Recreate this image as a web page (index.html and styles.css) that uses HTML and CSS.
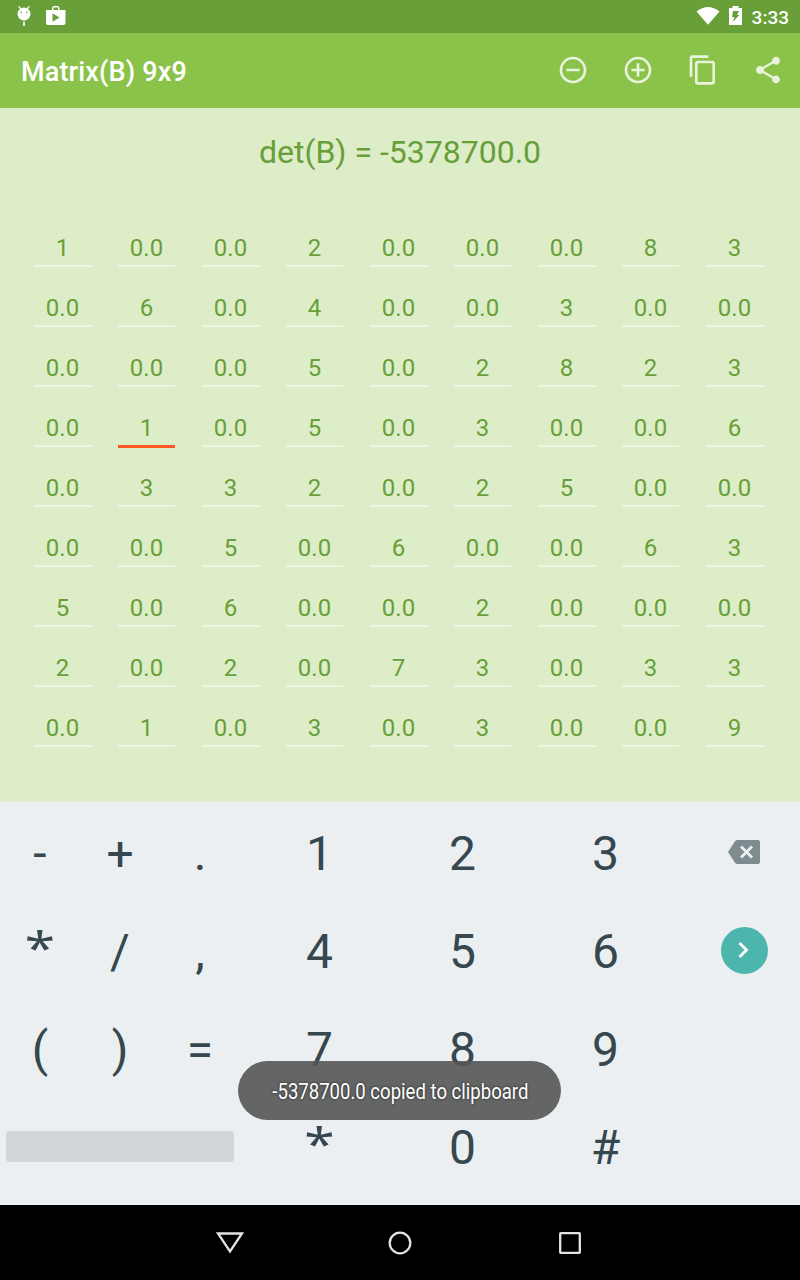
FILE: index.html
```html
<!DOCTYPE html>
<html lang="en">
<head>
	<meta charset="utf-8">
	<title>Matrix(B) 9x9</title>
	<link rel="stylesheet" href="styles.css">
</head>
<body>
	<div class="status-bar">
		<svg class="bug-icon" width="14" height="20" viewBox="0 0 14 20">
			<path d="M1.6 0.4L4 3M12.4 0.4L10 3" stroke="#fff" stroke-width="1.2"/>
			<circle cx="7" cy="8" r="6.5" fill="#fff"/>
			<path d="M7 15.5V20" stroke="#fff" stroke-width="1.6"/>
			<circle cx="4.3" cy="6.3" r="0.8" fill="#689f38"/>
			<circle cx="9.7" cy="6.3" r="0.8" fill="#689f38"/>
		</svg>
		<svg class="store-icon" width="20" height="19" viewBox="0 0 20 19">
			<path fill="#fff" fill-rule="evenodd" d="M0 4H6V2.2Q6 0 8.2 0H11.3Q13.5 0 13.5 2.2V4H19.5V17Q19.5 19 17.5 19H2Q0 19 0 17ZM7.5 4H12V1.6H7.5ZM6.5 7.2V15.8L13.5 11.5Z"/>
		</svg>
		<div class="status-right">
			<svg width="24" height="19" viewBox="0 0 24 19">
				<path d="M0.5 5.5Q12-3.5 23.5 5.5L12 18.8Z" fill="#fff"/>
			</svg>
			<svg class="battery-icon" width="13" height="19" viewBox="0 0 13 19">
				<path d="M0 2H3.5V0H9.5V2H13V19H0Z" fill="#fff"/>
				<path d="M4 5H10L8 9H10.5L3.5 16L5.5 11H3Z" fill="#689f38"/>
			</svg>
			<span class="clock">3:33</span>
		</div>
	</div>

	<header class="toolbar">
		<h1>Matrix(B) 9x9</h1>
		<div class="actions">
			<svg width="32" height="32" viewBox="0 0 24 24"><path d="M7 11v2h10v-2H7zm5-9C6.48 2 2 6.48 2 12s4.480 10 10 10 10-4.480 10-10S17.520 2 12 2zm0 18c-4.410 0-8-3.590-8-8s3.590-8 8-8 8 3.590 8 8-3.590 8-8 8z"/></svg>
			<svg width="32" height="32" viewBox="0 0 24 24"><path d="M13 7h-2v4H7v2h4v4h2v-4h4v-2h-4V7zm-1-5C6.480 2 2 6.480 2 12s4.480 10 10 10 10-4.480 10-10S17.520 2 12 2zm0 18c-4.410 0-8-3.590-8-8s3.590-8 8-8 8 3.590 8 8-3.590 8-8 8z"/></svg>
			<svg width="32" height="32" viewBox="0 0 24 24"><path d="M16 1H4c-1.100 0-2 .9-2 2v14h2V3h12V1zm3 4H8c-1.100 0-2 .9-2 2v14c0 1.100.9 2 2 2h11c1.100 0 2-.9 2-2V7c0-1.100-.9-2-2-2zm0 16H8V7h11v14z"/></svg>
			<svg width="32" height="32" viewBox="0 0 24 24"><path d="M18 16.080c-.76 0-1.440.3-1.960.77L8.910 12.700c.05-.23.09-.46.09-.7s-.04-.47-.09-.7l7.050-4.110c.54.5 1.250.81 2.040.81 1.660 0 3-1.340 3-3s-1.340-3-3-3-3 1.340-3 3c0 .24.04.47.09.7L8.040 9.810C7.500 9.310 6.790 9 6 9c-1.660 0-3 1.340-3 3s1.340 3 3 3c.79 0 1.500-.31 2.040-.81l7.120 4.160c-.05.21-.08.43-.08.65 0 1.610 1.310 2.920 2.920 2.920s2.920-1.310 2.920-2.920-1.310-2.920-2.920-2.920z"/></svg>
		</div>
	</header>

	<main class="content">
		<p class="result">det(B) = -5378700.0</p>
		<div class="matrix" id="matrix"></div>
	</main>

	<section class="keypad">
		<div class="symbols">
			<span class="key">-</span><span class="key">+</span><span class="key">.</span>
			<span class="key star">*</span><span class="key">/</span><span class="key">,</span>
			<span class="key">(</span><span class="key">)</span><span class="key">=</span>
			<span class="space"></span>
		</div>
		<div class="digits">
			<span class="key">1</span><span class="key">2</span><span class="key">3</span>
			<span class="key">4</span><span class="key">5</span><span class="key">6</span>
			<span class="key">7</span><span class="key">8</span><span class="key">9</span>
			<span class="key star">*</span><span class="key">0</span><span class="key">#</span>
		</div>
		<div class="side-keys">
			<div class="side-key">
				<svg width="32" height="24" viewBox="0 0 32 24">
					<path d="M9.500 0H30Q32 0 32 2V22Q32 24 30 24H9.500Q8 24 7 22.700L0 12L7 1.300Q8 0 9.500 0Z" fill="#808b90"/>
					<path d="M13 6.500L24 17.500M24 6.500L13 17.500" stroke="#eceff1" stroke-width="2.700"/>
				</svg>
			</div>
			<div class="side-key">
				<div class="next">
					<svg width="12" height="18" viewBox="0 0 12 18"><path d="M1.500 2L8.500 9L1.500 16" fill="none" stroke="#fff" stroke-width="2.800"/></svg>
				</div>
			</div>
		</div>
		<div class="toast"><span>-5378700.0 copied to clipboard</span></div>
	</section>

	<nav class="nav-bar">
		<svg width="28" height="22" viewBox="0 0 28 22"><path d="M2 1.500H26L14 19.500Z"/></svg>
		<svg width="24" height="24" viewBox="0 0 24 24"><circle cx="12" cy="12" r="10.300"/></svg>
		<svg width="28" height="22" viewBox="0 0 28 22"><rect x="4.200" y="1.200" width="19.600" height="19.600" rx="0.500"/></svg>
	</nav>

	<script>
		const rows = [
			["1", "0.0", "0.0", "2", "0.0", "0.0", "0.0", "8", "3"],
			["0.0", "6", "0.0", "4", "0.0", "0.0", "3", "0.0", "0.0"],
			["0.0", "0.0", "0.0", "5", "0.0", "2", "8", "2", "3"],
			["0.0", "1", "0.0", "5", "0.0", "3", "0.0", "0.0", "6"],
			["0.0", "3", "3", "2", "0.0", "2", "5", "0.0", "0.0"],
			["0.0", "0.0", "5", "0.0", "6", "0.0", "0.0", "6", "3"],
			["5", "0.0", "6", "0.0", "0.0", "2", "0.0", "0.0", "0.0"],
			["2", "0.0", "2", "0.0", "7", "3", "0.0", "3", "3"],
			["0.0", "1", "0.0", "3", "0.0", "3", "0.0", "0.0", "9"]
		];
		const matrix = document.getElementById("matrix");
		rows.forEach(function(row, r) {
			row.forEach(function(value, c) {
				const cell = document.createElement("span");
				cell.className = r === 3 && c === 1 ? "cell focused" : "cell";
				cell.textContent = value;
				matrix.appendChild(cell);
			});
		});
	</script>
</body>
</html>
```
FILE: styles.css
```css
* {
	box-sizing: border-box;
}

body {
	width: 800px;
	height: 1280px;
	margin: 0;
	overflow: hidden;
	display: flex;
	flex-direction: column;
	font-family: Roboto, sans-serif;
	background-color: #dcedc8;
}

svg {
	display: block;
}

.status-bar {
	height: 33px;
	padding: 6px 11px 0 17px;
	display: flex;
	align-items: flex-start;
	background-color: #689f38;
}

.store-icon {
	margin-left: 15px;
}

.status-right {
	display: flex;
	margin-left: auto;
}

.battery-icon {
	margin-left: 9px;
}

.clock {
	margin-left: 10px;
	font-size: 19px;
	line-height: 23px;
	font-weight: 500;
	color: #fff;
}

.toolbar {
	height: 75px;
	padding: 0 16.500px 0 21px;
	display: flex;
	align-items: center;
	justify-content: space-between;
	background-color: #8bc34a;
}

.toolbar h1 {
	margin: 3px 0 0;
	font-size: 27px;
	font-weight: 500;
	letter-spacing: 0.15px;
	color: #fff;
}

.actions {
	display: flex;
	gap: 33px;
	margin-bottom: 2px;
	fill: rgba(255, 255, 255, 0.8);
}

.content {
	height: 694px;
}

.result {
	margin: 0;
	padding-top: 24px;
	font-size: 32px;
	line-height: 40px;
	text-align: center;
	color: #689f38;
}

.matrix {
	display: grid;
	grid-template-columns: repeat(9, 57px);
	grid-auto-rows: 40px;
	gap: 20px 27px;
	padding: 56px 0 0 34px;
}

.cell {
	height: 39px;
	border-bottom: 2px solid #edf6e4;
	font-size: 24px;
	line-height: 41px;
	text-align: center;
	color: #689f38;
}

.focused {
	height: 40px;
	border-bottom: 3px solid #ff5722;
}

.keypad {
	position: relative;
	height: 403px;
	display: flex;
	background-color: #eceff1;
}

.symbols {
	width: 240px;
	display: grid;
	grid-template-columns: repeat(3, 80px);
	grid-auto-rows: 98px;
}

.digits {
	margin-left: 8px;
	display: grid;
	grid-template-columns: repeat(3, 143px);
	grid-auto-rows: 98px;
}

.key {
	padding-top: 3px;
	font-size: 48px;
	line-height: 98px;
	text-align: center;
	color: #37474f;
}

.star {
	font-family: "Noto Sans", sans-serif;
	font-size: 55px;
	transform: translateY(-4px) scaleY(0.82);
}

.space {
	grid-column: 1 / 4;
	height: 31px;
	margin: 35px 6px 0;
	border-radius: 4px;
	background-color: #d1d6d9;
}

.side-keys {
	margin: 1px 0 0 44px;
}

.side-key {
	width: 47px;
	height: 98px;
	padding-right: 1px;
	display: flex;
	align-items: center;
	justify-content: center;
}

.next {
	width: 47px;
	height: 47px;
	display: flex;
	flex-shrink: 0;
	align-items: center;
	justify-content: center;
	border-radius: 50%;
	background-color: #4db6ac;
}

.toast {
	position: absolute;
	left: 238px;
	top: 259px;
	width: 323px;
	height: 59px;
	padding: 2px 0 0 1px;
	display: flex;
	align-items: center;
	justify-content: center;
	border-radius: 30px;
	background-color: rgba(85, 85, 85, 0.9);
}

.toast span {
	font-size: 21.500px;
	white-space: nowrap;
	color: #fff;
	text-shadow: 0 0 3px rgba(0, 0, 0, 0.7);
	transform: scaleX(0.863);
}

.nav-bar {
	height: 75px;
	padding: 0 216px;
	display: flex;
	align-items: center;
	justify-content: space-between;
	background-color: #000;
	fill: none;
	stroke: #e4e4e4;
	stroke-width: 2.300px;
}
```
